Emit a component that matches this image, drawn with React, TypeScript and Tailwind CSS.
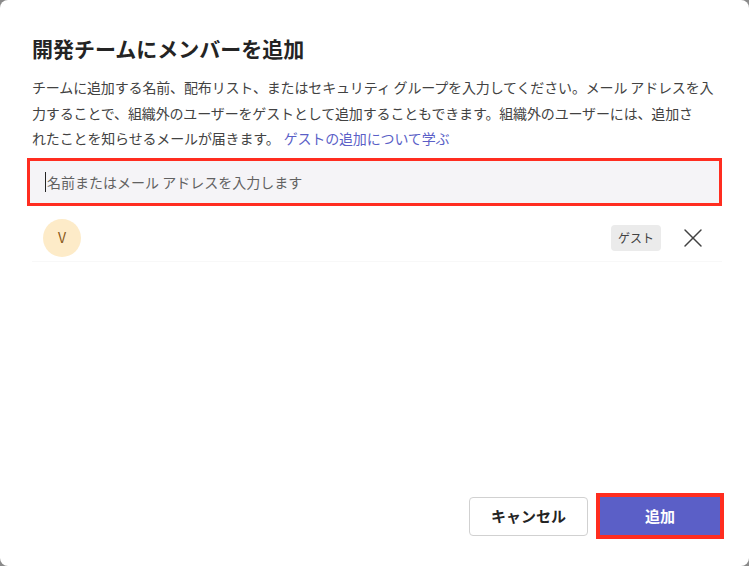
import { X } from 'lucide-react';

const font = { fontFamily: '"Noto Sans CJK JP", "Noto Sans", sans-serif' };

export default function App() {
    return (
        <div className="w-[749px] h-[566px] bg-[#8a8a8a]" style={font}>
            <div className="w-full h-full bg-white rounded-[8px] flex flex-col pl-[32px] pr-[27px]">
                <h1 className="mt-[33px] text-[21px] leading-[30px] font-bold text-[#242424] whitespace-nowrap">
                    開発チームにメンバーを追加
                </h1>

                <div className="mt-[12px] text-[14px] leading-[25.7px] text-[#424242] tracking-[-0.15px] whitespace-nowrap">
                    <div>チームに追加する名前、配布リスト、またはセキュリティ グループを入力してください。メール アドレスを入</div>
                    <div>力することで、組織外のユーザーをゲストとして追加することもできます。組織外のユーザーには、追加さ</div>
                    <div>
                        れたことを知らせるメールが届きます。
                        <span className="text-[#5b5fc7] ml-[4px]">ゲストの追加について学ぶ</span>
                    </div>
                </div>

                <div className="mt-[6px] -ml-[5px] border-[3px] border-[#ff2d20] h-[48px]">
                    <div className="h-full bg-[#f5f4f7] flex items-center pl-[15px]">
                        <span className="w-px h-[20px] bg-[#242424]" />
                        <span className="ml-[1px] text-[14px] text-[#616161]">名前またはメール アドレスを入力します</span>
                    </div>
                </div>

                <div className="mt-[8px] h-[48px] flex items-center pl-[11px] pr-[13px] border-b border-[#f8f8f8]">
                    <div className="w-[38px] h-[38px] rounded-full bg-[#fdebc8] flex items-center justify-center text-[14px] text-[#8a5a1a]">
                        V
                    </div>
                    <div className="flex-1" />
                    <div className="h-[26px] w-[50px] rounded-[4px] bg-[#ebebeb] flex items-center justify-center text-[12px] text-[#424242]">
                        ゲスト
                    </div>
                    <X className="ml-[16px] w-[32px] h-[32px] text-[#424242]" strokeWidth={1.1} />
                </div>

                <div className="flex-1" />

                <div className="flex justify-end items-center gap-[8px] mb-[27px] -mr-[2px]">
                    <button className="w-[119px] h-[39px] rounded-[4px] border border-[#d1d1d1] bg-white text-[15px] font-bold text-[#242424]">
                        キャンセル
                    </button>
                    <div className="border-[4px] border-[#ff2d20] p-0">
                        <button className="w-[120px] h-[38px] bg-[#5b5fc7] text-[15px] font-bold text-white">
                            追加
                        </button>
                    </div>
                </div>
            </div>
        </div>
    );
}
